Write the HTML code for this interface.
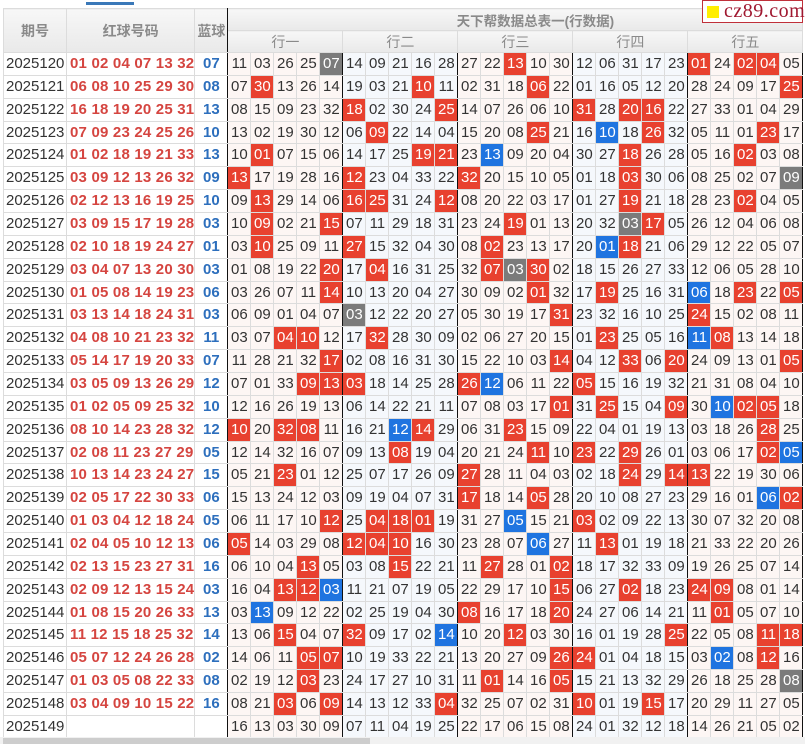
<!DOCTYPE html>
<html><head><meta charset="utf-8"><style>
*{margin:0;padding:0;box-sizing:border-box}
body{width:805px;height:744px;overflow:hidden;background:#fff;font-family:"Liberation Sans","Noto Sans CJK SC",sans-serif;position:relative}
.tab{position:absolute;left:86px;top:2px;width:48px;height:3px;background:#3a78b8}
.logo{position:absolute;left:702px;top:0;width:101px;height:23px;border:1px solid #c0303a;background:#fff;font-family:"Liberation Serif",serif;font-size:20px;color:#a01830;line-height:21px;padding-left:21px;letter-spacing:0.5px}
.logo i{position:absolute;left:4px;top:5px;width:12px;height:12px;background:#ffee00}
table{position:absolute;left:3px;top:8px;border-collapse:collapse;table-layout:fixed}
td,th{border:1px solid #dcdcdc;text-align:center;white-space:nowrap;overflow:hidden;padding:0}
th{background:linear-gradient(#f7f7f7,#e9e9e9);color:#8a8a8a;font-size:14px;font-weight:bold}
th.t{height:22px;font-size:13.5px;text-align:center;padding-left:40px}
th.s{height:22px;font-weight:normal;font-size:14px}
td{height:22.86px;font-size:15px;color:#333;line-height:20px}
td.q{text-align:left;padding-left:2px;color:#333;font-size:15px}
td.h{color:#d54540;font-weight:bold;font-size:15px;letter-spacing:0.2px;text-align:left;padding-left:3px}
td.l{color:#2d6fbd;font-weight:bold}
tr td:nth-child(n+4):nth-child(-n+8),tr td:nth-child(n+14):nth-child(-n+18),tr td:nth-child(n+24):nth-child(-n+28){background:#fdf6f4}
tr td:nth-child(n+9):nth-child(-n+13),tr td:nth-child(n+19):nth-child(-n+23){background:#f5f8fc}
tr td:nth-child(3),tr td:nth-child(8),tr td:nth-child(13),tr td:nth-child(18),tr td:nth-child(23),tr td:nth-child(28){border-right:1px solid #111}
td.r{background:#e8412f!important;color:#fff!important}
td.b{background:#1f74e0!important;color:#fff!important}
td.g{background:#7b7b7b!important;color:#fff!important}
th.l1{border-right:1px solid #dcdcdc}
.sb{position:absolute;left:0;top:737px;width:805px;height:7px;background:#f1f1f1}
.sb i{position:absolute;left:3px;top:1px;width:367px;height:6px;background:#cdcdcd}
</style></head><body>
<div class="tab"></div>
<table>
<colgroup><col style="width:63px"><col style="width:128px"><col style="width:33px"><col span="25" style="width:23px"></colgroup>
<tr><th rowspan="2" style="height:44px">期号</th><th rowspan="2">红球号码</th><th rowspan="2" style="border-right:1px solid #111">蓝球</th><th colspan="25" class="t">天下帮数据总表一(行数据)</th></tr>
<tr><th colspan="5" class="s">行一</th><th colspan="5" class="s">行二</th><th colspan="5" class="s">行三</th><th colspan="5" class="s">行四</th><th colspan="5" class="s">行五</th></tr>
<tr><td class="q">2025120</td><td class="h">01 02 04 07 13 32</td><td class="l">07</td><td>11</td><td>03</td><td>26</td><td>25</td><td class="g">07</td><td>14</td><td>09</td><td>21</td><td>16</td><td>28</td><td>27</td><td>22</td><td class="r">13</td><td>10</td><td>30</td><td>12</td><td>06</td><td>31</td><td>17</td><td>23</td><td class="r">01</td><td>24</td><td class="r">02</td><td class="r">04</td><td>05</td></tr>
<tr><td class="q">2025121</td><td class="h">06 08 10 25 29 30</td><td class="l">08</td><td>07</td><td class="r">30</td><td>13</td><td>26</td><td>14</td><td>19</td><td>03</td><td>21</td><td class="r">10</td><td>11</td><td>02</td><td>31</td><td>18</td><td class="r">06</td><td>22</td><td>01</td><td>16</td><td>05</td><td>12</td><td>20</td><td>28</td><td>24</td><td>09</td><td>17</td><td class="r">25</td></tr>
<tr><td class="q">2025122</td><td class="h">16 18 19 20 25 31</td><td class="l">13</td><td>08</td><td>15</td><td>09</td><td>23</td><td>32</td><td class="r">18</td><td>02</td><td>30</td><td>24</td><td class="r">25</td><td>14</td><td>07</td><td>26</td><td>06</td><td>10</td><td class="r">31</td><td>28</td><td class="r">20</td><td class="r">16</td><td>22</td><td>27</td><td>33</td><td>01</td><td>04</td><td>29</td></tr>
<tr><td class="q">2025123</td><td class="h">07 09 23 24 25 26</td><td class="l">10</td><td>13</td><td>02</td><td>19</td><td>30</td><td>12</td><td>06</td><td class="r">09</td><td>22</td><td>14</td><td>04</td><td>15</td><td>20</td><td>08</td><td class="r">25</td><td>21</td><td>16</td><td class="b">10</td><td>18</td><td class="r">26</td><td>32</td><td>05</td><td>11</td><td>01</td><td class="r">23</td><td>17</td></tr>
<tr><td class="q">2025124</td><td class="h">01 02 18 19 21 33</td><td class="l">13</td><td>10</td><td class="r">01</td><td>07</td><td>15</td><td>06</td><td>14</td><td>17</td><td>25</td><td class="r">19</td><td class="r">21</td><td>23</td><td class="b">13</td><td>09</td><td>20</td><td>04</td><td>30</td><td>27</td><td class="r">18</td><td>26</td><td>28</td><td>05</td><td>16</td><td class="r">02</td><td>03</td><td>08</td></tr>
<tr><td class="q">2025125</td><td class="h">03 09 12 13 26 32</td><td class="l">09</td><td class="r">13</td><td>17</td><td>19</td><td>28</td><td>16</td><td class="r">12</td><td>23</td><td>04</td><td>33</td><td>22</td><td class="r">32</td><td>20</td><td>15</td><td>10</td><td>05</td><td>01</td><td>18</td><td class="r">03</td><td>30</td><td>06</td><td>08</td><td>25</td><td>02</td><td>07</td><td class="g">09</td></tr>
<tr><td class="q">2025126</td><td class="h">02 12 13 16 19 25</td><td class="l">10</td><td>09</td><td class="r">13</td><td>29</td><td>14</td><td>06</td><td class="r">16</td><td class="r">25</td><td>31</td><td>24</td><td class="r">12</td><td>08</td><td>20</td><td>22</td><td>03</td><td>17</td><td>01</td><td>27</td><td class="r">19</td><td>21</td><td>18</td><td>28</td><td>23</td><td class="r">02</td><td>04</td><td>05</td></tr>
<tr><td class="q">2025127</td><td class="h">03 09 15 17 19 28</td><td class="l">03</td><td>10</td><td class="r">09</td><td>02</td><td>21</td><td class="r">15</td><td>07</td><td>11</td><td>29</td><td>18</td><td>31</td><td>23</td><td>24</td><td class="r">19</td><td>01</td><td>13</td><td>20</td><td>32</td><td class="g">03</td><td class="r">17</td><td>05</td><td>26</td><td>12</td><td>04</td><td>06</td><td>08</td></tr>
<tr><td class="q">2025128</td><td class="h">02 10 18 19 24 27</td><td class="l">01</td><td>03</td><td class="r">10</td><td>25</td><td>09</td><td>11</td><td class="r">27</td><td>15</td><td>32</td><td>04</td><td>30</td><td>08</td><td class="r">02</td><td>23</td><td>13</td><td>17</td><td>20</td><td class="b">01</td><td class="r">18</td><td>21</td><td>06</td><td>29</td><td>12</td><td>22</td><td>05</td><td>07</td></tr>
<tr><td class="q">2025129</td><td class="h">03 04 07 13 20 30</td><td class="l">03</td><td>01</td><td>08</td><td>19</td><td>22</td><td class="r">20</td><td>17</td><td class="r">04</td><td>16</td><td>31</td><td>25</td><td>32</td><td class="r">07</td><td class="g">03</td><td class="r">30</td><td>02</td><td>18</td><td>15</td><td>26</td><td>27</td><td>33</td><td>12</td><td>06</td><td>05</td><td>28</td><td>10</td></tr>
<tr><td class="q">2025130</td><td class="h">01 05 08 14 19 23</td><td class="l">06</td><td>03</td><td>26</td><td>07</td><td>11</td><td class="r">14</td><td>10</td><td>13</td><td>20</td><td>04</td><td>27</td><td>30</td><td>09</td><td>02</td><td class="r">01</td><td>32</td><td>17</td><td class="r">19</td><td>25</td><td>16</td><td>31</td><td class="b">06</td><td>18</td><td class="r">23</td><td>22</td><td class="r">05</td></tr>
<tr><td class="q">2025131</td><td class="h">03 13 14 18 24 31</td><td class="l">03</td><td>06</td><td>09</td><td>01</td><td>04</td><td>07</td><td class="g">03</td><td>12</td><td>22</td><td>20</td><td>27</td><td>05</td><td>30</td><td>19</td><td>17</td><td class="r">31</td><td>23</td><td>32</td><td>16</td><td>10</td><td>25</td><td class="r">24</td><td>15</td><td>02</td><td>08</td><td>11</td></tr>
<tr><td class="q">2025132</td><td class="h">04 08 10 21 23 32</td><td class="l">11</td><td>03</td><td>07</td><td class="r">04</td><td class="r">10</td><td>12</td><td>17</td><td class="r">32</td><td>28</td><td>30</td><td>09</td><td>02</td><td>06</td><td>27</td><td>20</td><td>15</td><td>01</td><td class="r">23</td><td>25</td><td>05</td><td>16</td><td class="b">11</td><td class="r">08</td><td>13</td><td>14</td><td>18</td></tr>
<tr><td class="q">2025133</td><td class="h">05 14 17 19 20 33</td><td class="l">07</td><td>11</td><td>28</td><td>21</td><td>32</td><td class="r">17</td><td>02</td><td>08</td><td>16</td><td>31</td><td>30</td><td>15</td><td>22</td><td>10</td><td>03</td><td class="r">14</td><td>04</td><td>12</td><td class="r">33</td><td>06</td><td class="r">20</td><td>24</td><td>09</td><td>13</td><td>01</td><td class="r">05</td></tr>
<tr><td class="q">2025134</td><td class="h">03 05 09 13 26 29</td><td class="l">12</td><td>07</td><td>01</td><td>33</td><td class="r">09</td><td class="r">13</td><td class="r">03</td><td>18</td><td>14</td><td>25</td><td>28</td><td class="r">26</td><td class="b">12</td><td>06</td><td>11</td><td>22</td><td class="r">05</td><td>15</td><td>16</td><td>19</td><td>32</td><td>21</td><td>31</td><td>08</td><td>04</td><td>10</td></tr>
<tr><td class="q">2025135</td><td class="h">01 02 05 09 25 32</td><td class="l">10</td><td>12</td><td>16</td><td>26</td><td>19</td><td>13</td><td>06</td><td>14</td><td>22</td><td>21</td><td>11</td><td>07</td><td>08</td><td>03</td><td>17</td><td class="r">01</td><td>31</td><td class="r">25</td><td>15</td><td>04</td><td class="r">09</td><td>30</td><td class="b">10</td><td class="r">02</td><td class="r">05</td><td>18</td></tr>
<tr><td class="q">2025136</td><td class="h">08 10 14 23 28 32</td><td class="l">12</td><td class="r">10</td><td>20</td><td class="r">32</td><td class="r">08</td><td>11</td><td>16</td><td>21</td><td class="b">12</td><td class="r">14</td><td>29</td><td>06</td><td>31</td><td class="r">23</td><td>15</td><td>09</td><td>22</td><td>04</td><td>01</td><td>19</td><td>13</td><td>03</td><td>18</td><td>26</td><td class="r">28</td><td>25</td></tr>
<tr><td class="q">2025137</td><td class="h">02 08 11 23 27 29</td><td class="l">05</td><td>12</td><td>14</td><td>32</td><td>16</td><td>07</td><td>09</td><td>13</td><td class="r">08</td><td>19</td><td>04</td><td>20</td><td>21</td><td>24</td><td class="r">11</td><td>10</td><td class="r">23</td><td>22</td><td class="r">29</td><td>26</td><td>01</td><td>03</td><td>06</td><td>17</td><td class="r">02</td><td class="b">05</td></tr>
<tr><td class="q">2025138</td><td class="h">10 13 14 23 24 27</td><td class="l">15</td><td>05</td><td>21</td><td class="r">23</td><td>01</td><td>12</td><td>25</td><td>07</td><td>17</td><td>26</td><td>09</td><td class="r">27</td><td>28</td><td>11</td><td>04</td><td>03</td><td>02</td><td>18</td><td class="r">24</td><td>29</td><td class="r">14</td><td class="r">13</td><td>22</td><td>19</td><td>30</td><td>06</td></tr>
<tr><td class="q">2025139</td><td class="h">02 05 17 22 30 33</td><td class="l">06</td><td>15</td><td>13</td><td>24</td><td>12</td><td>03</td><td>09</td><td>19</td><td>04</td><td>07</td><td>31</td><td class="r">17</td><td>18</td><td>14</td><td class="r">05</td><td>28</td><td>20</td><td>10</td><td>08</td><td>27</td><td>23</td><td>29</td><td>16</td><td>01</td><td class="b">06</td><td class="r">02</td></tr>
<tr><td class="q">2025140</td><td class="h">01 03 04 12 18 24</td><td class="l">05</td><td>06</td><td>11</td><td>17</td><td>10</td><td class="r">12</td><td>25</td><td class="r">04</td><td class="r">18</td><td class="r">01</td><td>19</td><td>31</td><td>27</td><td class="b">05</td><td>15</td><td>21</td><td class="r">03</td><td>02</td><td>09</td><td>22</td><td>13</td><td>30</td><td>07</td><td>32</td><td>20</td><td>08</td></tr>
<tr><td class="q">2025141</td><td class="h">02 04 05 10 12 13</td><td class="l">06</td><td class="r">05</td><td>14</td><td>03</td><td>29</td><td>08</td><td class="r">12</td><td class="r">04</td><td class="r">10</td><td>16</td><td>30</td><td>23</td><td>28</td><td>07</td><td class="b">06</td><td>27</td><td>11</td><td class="r">13</td><td>01</td><td>19</td><td>18</td><td>21</td><td>33</td><td>22</td><td>20</td><td>26</td></tr>
<tr><td class="q">2025142</td><td class="h">02 13 15 23 27 31</td><td class="l">16</td><td>06</td><td>10</td><td>04</td><td class="r">13</td><td>05</td><td>03</td><td>08</td><td class="r">15</td><td>22</td><td>21</td><td>11</td><td class="r">27</td><td>28</td><td>01</td><td class="r">02</td><td>18</td><td>17</td><td>32</td><td>33</td><td>09</td><td>19</td><td>26</td><td>25</td><td>07</td><td>14</td></tr>
<tr><td class="q">2025143</td><td class="h">02 09 12 13 15 24</td><td class="l">03</td><td>16</td><td>04</td><td class="r">13</td><td class="r">12</td><td class="b">03</td><td>11</td><td>21</td><td>07</td><td>19</td><td>05</td><td>22</td><td>29</td><td>17</td><td>10</td><td class="r">15</td><td>06</td><td>27</td><td class="r">02</td><td>18</td><td>23</td><td class="r">24</td><td class="r">09</td><td>08</td><td>01</td><td>14</td></tr>
<tr><td class="q">2025144</td><td class="h">01 08 15 20 26 33</td><td class="l">13</td><td>03</td><td class="b">13</td><td>09</td><td>12</td><td>22</td><td>02</td><td>25</td><td>19</td><td>04</td><td>30</td><td class="r">08</td><td>16</td><td>17</td><td>18</td><td class="r">20</td><td>24</td><td>27</td><td>06</td><td>14</td><td>21</td><td>11</td><td class="r">01</td><td>05</td><td>07</td><td>10</td></tr>
<tr><td class="q">2025145</td><td class="h">11 12 15 18 25 32</td><td class="l">14</td><td>13</td><td>06</td><td class="r">15</td><td>04</td><td>07</td><td class="r">32</td><td>09</td><td>17</td><td>02</td><td class="b">14</td><td>10</td><td>20</td><td class="r">12</td><td>03</td><td>30</td><td>16</td><td>01</td><td>19</td><td>28</td><td class="r">25</td><td>22</td><td>05</td><td>08</td><td class="r">11</td><td class="r">18</td></tr>
<tr><td class="q">2025146</td><td class="h">05 07 12 24 26 28</td><td class="l">02</td><td>14</td><td>06</td><td>11</td><td class="r">05</td><td class="r">07</td><td>10</td><td>19</td><td>33</td><td>22</td><td>21</td><td>13</td><td>20</td><td>27</td><td>09</td><td class="r">26</td><td class="r">24</td><td>01</td><td>04</td><td>18</td><td>15</td><td>03</td><td class="b">02</td><td>08</td><td class="r">12</td><td>16</td></tr>
<tr><td class="q">2025147</td><td class="h">01 03 05 08 22 33</td><td class="l">08</td><td>02</td><td>19</td><td>12</td><td class="r">03</td><td>23</td><td>24</td><td>17</td><td>27</td><td>10</td><td>31</td><td>11</td><td class="r">01</td><td>14</td><td>16</td><td class="r">05</td><td>15</td><td>21</td><td>13</td><td>32</td><td>29</td><td>26</td><td>18</td><td>25</td><td>28</td><td class="g">08</td></tr>
<tr><td class="q">2025148</td><td class="h">03 04 09 10 15 22</td><td class="l">16</td><td>08</td><td>21</td><td class="r">03</td><td>06</td><td class="r">09</td><td>14</td><td>13</td><td>12</td><td>33</td><td class="r">04</td><td>32</td><td>25</td><td>07</td><td>02</td><td>31</td><td class="r">10</td><td>01</td><td>19</td><td class="r">15</td><td>17</td><td>20</td><td>29</td><td>11</td><td>27</td><td>05</td></tr>
<tr><td class="q">2025149</td><td class="h"></td><td class="l"></td><td>16</td><td>13</td><td>03</td><td>30</td><td>09</td><td>07</td><td>11</td><td>04</td><td>19</td><td>25</td><td>22</td><td>17</td><td>06</td><td>15</td><td>08</td><td>24</td><td>01</td><td>32</td><td>12</td><td>18</td><td>14</td><td>26</td><td>21</td><td>05</td><td>02</td></tr>
</table>
<div class="logo"><i></i>cz89.com</div>
<div class="sb"><i></i></div>
</body></html>
